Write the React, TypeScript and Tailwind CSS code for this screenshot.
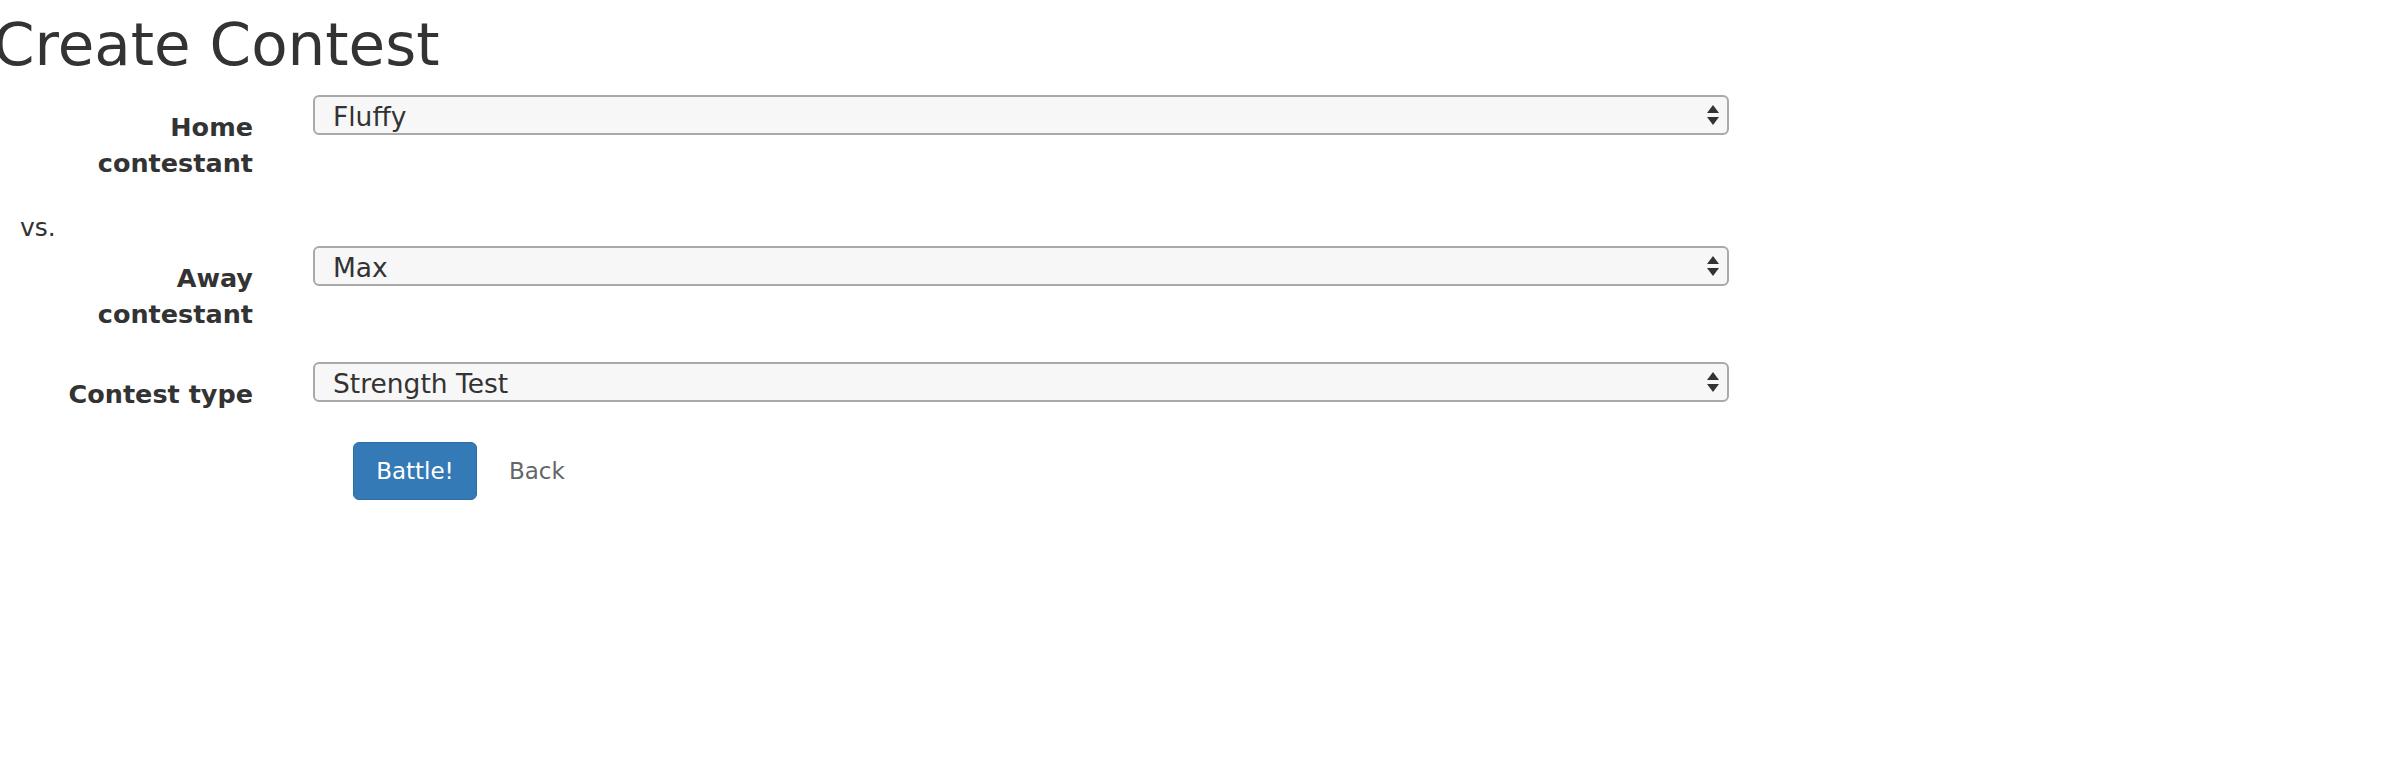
import { ChangeEvent, useState } from "react";

const contestants = ["Fluffy", "Max", "Bella", "Rocky"];
const contestTypes = ["Strength Test", "Speed Race", "Agility Course"];

const Arrows = () => (
  <svg
    width="12"
    height="20"
    viewBox="0 0 12 20"
    className="pointer-events-none absolute right-[10px] top-[10px]"
  >
    <path d="M6 0 L12 8 L0 8 Z" fill="#333333" />
    <path d="M0 12 L12 12 L6 20 Z" fill="#333333" />
  </svg>
);

type FieldProps = {
  label: string;
  value: string;
  options: string[];
  onChange: (v: string) => void;
};

const Field = ({ label, value, options, onChange }: FieldProps) => (
  <div className="flex items-start">
    <label className="ml-[26px] w-[227px] pt-[14px] text-right text-[25.5px] font-bold leading-[36px] text-[#333333]">
      {label}
    </label>
    <div className="relative ml-[60px] w-[1416px]">
      <select
        value={value}
        onChange={(e: ChangeEvent<HTMLSelectElement>) => onChange(e.target.value)}
        className="h-[40px] w-full appearance-none rounded-[6px] border-2 border-[#a9a9a9] bg-[#f7f7f7] pl-[18px] text-[26.5px] text-[#333333] outline-none"
      >
        {options.map((o) => (
          <option key={o}>{o}</option>
        ))}
      </select>
      <Arrows />
    </div>
  </div>
);

export default function App() {
  const [home, setHome] = useState("Fluffy");
  const [away, setAway] = useState("Max");
  const [type, setType] = useState("Strength Test");

  return (
    <div className="h-screen w-full overflow-hidden bg-white font-['DejaVu_Sans',sans-serif] text-[#333333]">
      <h1 className="ml-[-7px] mt-[12px] text-[59.5px] font-normal leading-[65px]">
        Create Contest
      </h1>
      <form className="mt-[18px] flex flex-col" onSubmit={(e) => e.preventDefault()}>
        <Field label="Home contestant" value={home} options={contestants} onChange={setHome} />
        <div className="ml-[20px] mt-[29px] text-[25px] leading-[36px]">vs.</div>
        <Field label="Away contestant" value={away} options={contestants} onChange={setAway} />
        <div className="mt-[30px]">
          <Field label="Contest type" value={type} options={contestTypes} onChange={setType} />
        </div>
        <div className="ml-[353px] mt-[30px] flex items-center">
          <button
            type="submit"
            className="h-[58px] w-[124px] rounded-[6px] border border-[#2e6da4] bg-[#337ab7] text-[23px] text-white"
          >
            Battle!
          </button>
          <a href="#" className="ml-[32px] text-[23px] text-[#666666]">
            Back
          </a>
        </div>
      </form>
    </div>
  );
}
